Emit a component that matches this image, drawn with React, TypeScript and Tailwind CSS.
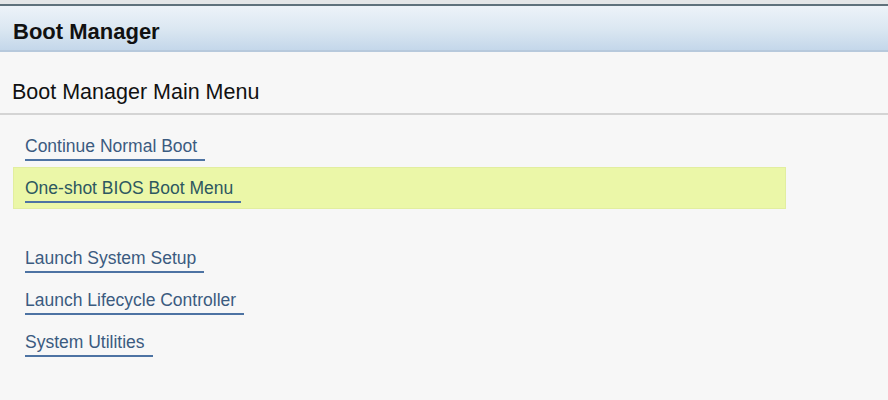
const items = [
  { label: "Continue Normal Boot" },
  { label: "One-shot BIOS Boot Menu", active: true },
  { spacer: true },
  { label: "Launch System Setup" },
  { label: "Launch Lifecycle Controller" },
  { label: "System Utilities" },
];

export default function App() {
  return (
    <div
      className="w-[888px] h-[400px] overflow-hidden bg-[#f7f7f7] text-black"
      style={{ fontFamily: '"Liberation Sans", Arial, sans-serif' }}
    >
      {/* top strip */}
      <div className="h-[4px] bg-[#e4e6e8]" />
      <div className="h-[2px] bg-[#5f717c]" />

      {/* title bar */}
      <div className="h-[46px] bg-gradient-to-b from-[#edf3f9] via-[#dce8f2] to-[#c4d7ea] border-b-2 border-[#b7c9dc] pt-[15px] pl-[13px]">
        <h1 className="text-[22px] font-bold text-[#111] leading-none">Boot Manager</h1>
      </div>

      {/* page heading */}
      <div className="h-[63px] border-b-2 border-[#d4d4d4] pt-[30px] pl-[12px]">
        <h2 className="text-[21.5px] text-[#111] leading-none">Boot Manager Main Menu</h2>
      </div>

      {/* menu */}
      <div className="pt-[10px] pl-[13px]">
        {items.map((it, i) =>
          it.spacer ? (
            <div key={i} className="h-[28px]" />
          ) : (
            <div
              key={i}
              className={
                it.active
                  ? "w-[773px] h-[42px] bg-[#ebf7a8] border border-[#e2eea0] flex items-end pb-[5px] pl-[11px]"
                  : "w-[773px] h-[42px] flex items-end pb-[6px] pl-[12px]"
              }
            >
              <a
                href="#"
                className={
                  it.active
                    ? "text-[17.5px] leading-[20px] pr-[8px] pb-[3px] border-b-2 border-[#4d73a3] text-[#2d5860]"
                    : "text-[17.5px] leading-[20px] pr-[8px] pb-[3px] border-b-2 border-[#4d73a3] text-[#3b5b80]"
                }
              >
                {it.label}
              </a>
            </div>
          )
        )}
      </div>
    </div>
  );
}
